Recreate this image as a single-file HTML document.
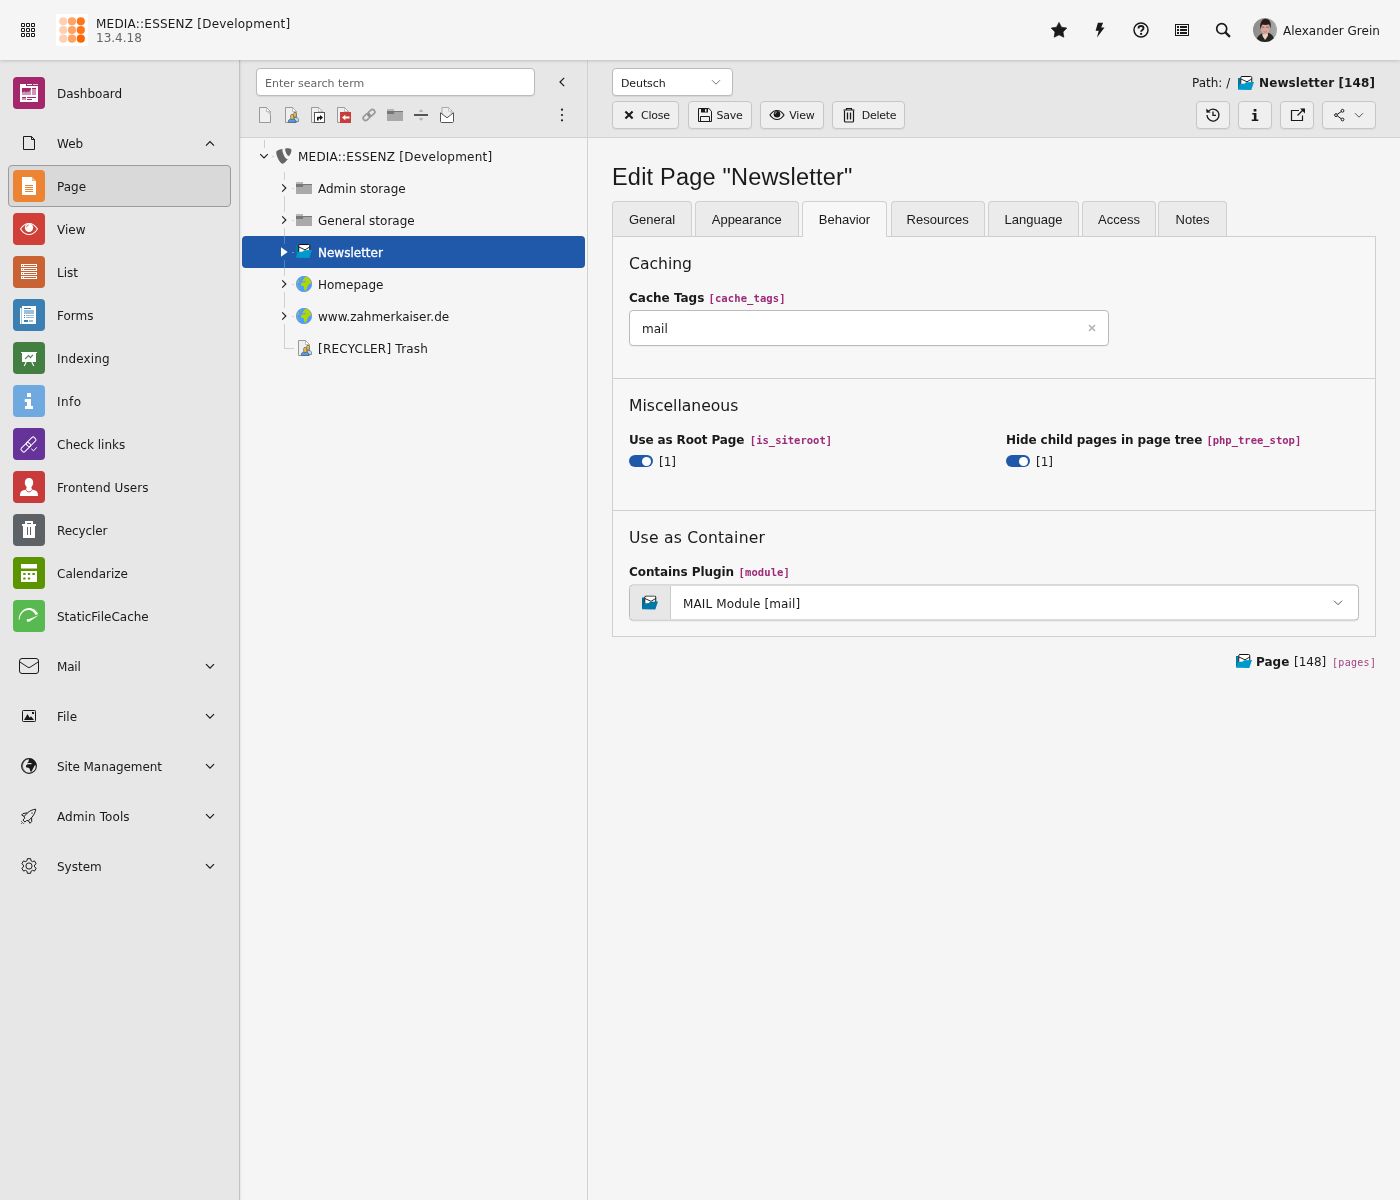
<!DOCTYPE html>
<html lang="en">
<head>
<meta charset="utf-8">
<title>Edit Page "Newsletter" - TYPO3</title>
<style>
*{box-sizing:border-box;margin:0;padding:0}
html,body{width:1400px;height:1200px;overflow:hidden}
body{font-family:"DejaVu Sans","Liberation Sans",sans-serif;font-size:12px;color:#1a1a1a;background:#f5f5f5;position:relative;line-height:1.5;will-change:transform}
svg{display:block}
.abs{position:absolute}
/* ---------- topbar ---------- */
#topbar{position:absolute;left:0;top:0;width:1400px;height:60px;background:#f5f5f5;z-index:5;box-shadow:0 1px 3px rgba(0,0,0,.17)}
#topbar .grid{position:absolute;left:20px;top:22px}
#logo{position:absolute;left:56px;top:14px;width:32px;height:32px;background:#fff}
#site{position:absolute;left:96px;top:17px;font-size:12px;line-height:14px;white-space:nowrap;letter-spacing:.22px}
#site .ver{color:#666;display:block;line-height:14px;letter-spacing:0}
.tb-ico{position:absolute;top:22px;width:16px;height:16px}
#avatar{position:absolute;left:1253px;top:18px;width:24px;height:24px}
#uname{position:absolute;left:1283px;top:22px;font-size:12px;line-height:18px;white-space:nowrap}
/* ---------- module menu ---------- */
#modmenu{position:absolute;left:0;top:60px;width:240px;height:1140px;background:#e7e7e7;border-right:1px solid #c2c2c2;box-shadow:1px 0 2px rgba(0,0,0,.07);z-index:3}
.mm{position:absolute;left:8px;width:223px;height:42px;font-size:12px;line-height:42px;white-space:nowrap;border:1px solid transparent;border-radius:4px}
.mm .ic{position:absolute;left:4px;top:4px;width:32px;height:32px;border-radius:4px;display:flex;align-items:center;justify-content:center}
.mm .lb{position:absolute;left:48px;top:0}
.mm .chev{position:absolute;left:193px;top:12px}
.mm.active{background:#d9d9d9;border-color:#9c9c9c}
/* ---------- page tree ---------- */
#tree{position:absolute;left:240px;top:60px;width:348px;height:1140px;background:#f5f5f5;border-right:1px solid #d2d2d2}
#treebar{position:absolute;left:0;top:0;width:347px;height:78px;background:#e7e7e7;border-bottom:1px solid #d2d2d2}
#tsearch{position:absolute;left:16px;top:8px;padding-top:1px;width:279px;height:28px;background:#fff;border:1px solid #bbb;border-radius:4px;font-size:11px;line-height:28px;padding-left:8px;color:#666;box-shadow:0 1px 1px rgba(0,0,0,.08)}
.ti{position:absolute;top:47px;width:16px;height:16px}
.row{position:absolute;left:2px;width:343px;height:32px;border-radius:4px;font-size:12px;line-height:32px;white-space:nowrap}
.row.sel{background:#2159aa;color:#fff}
.row.sel .nm{-webkit-text-stroke:.3px #fff}
.row .tg{position:absolute;top:8px;width:16px;height:16px}
.row .pi{position:absolute;top:8px;width:16px;height:16px}
.row .nm{position:absolute;top:1px}
/* ---------- content ---------- */
#dochead{position:absolute;left:588px;top:60px;width:812px;height:78px;background:#e7e7e7;border-bottom:1px solid #d2d2d2}
.btn{position:absolute;height:28px;border:1px solid #c6c6c6;border-radius:4px;background:#efefef;font-size:11px;line-height:26px;white-space:nowrap;box-shadow:0 1px 1px rgba(0,0,0,.06)}
.btn svg{position:absolute}
.btn span{position:absolute;top:1px;letter-spacing:-.25px}
#lang{position:absolute;left:24px;top:8px;padding-top:1px;letter-spacing:-.1px;width:121px;height:28px;border:1px solid #bbb;border-radius:4px;background:#fff;font-size:11px;line-height:28px;padding-left:8px;box-shadow:0 1px 1px rgba(0,0,0,.08)}
#path{position:absolute;right:24px;top:13px;font-size:13px;line-height:18px;white-space:nowrap}
h1{position:absolute;left:612px;top:159px;font-family:"Liberation Sans",sans-serif;font-weight:400;font-size:23.5px;letter-spacing:.2px;line-height:36px;white-space:nowrap;color:#1a1a1a;transform-origin:0 50%}
.tab{position:absolute;top:201px;height:36px;border:1px solid #d0d0d0;border-bottom:none;border-radius:4px 4px 0 0;background:#ebebeb;font-family:"Liberation Sans",sans-serif;font-size:13px;line-height:35px;text-align:center;white-space:nowrap}
.tab.on{background:#f7f7f7;z-index:2;box-shadow:0 1px 0 #f7f7f7}
#panel{position:absolute;left:612px;top:236px;width:764px;height:401px;border:1px solid #d0d0d0;background:#f7f7f7}
.sec{position:absolute;left:0;width:762px;border-top:1px solid #d0d0d0}
.h4{position:absolute;left:16px;font-size:15.6px;line-height:24px;white-space:nowrap}
.lbl{position:absolute;font-size:12px;font-weight:700;line-height:18px;white-space:nowrap}
code{font-family:"DejaVu Sans Mono","Liberation Mono",monospace;font-size:10.5px;color:#9c2a78;font-weight:700}
.inp{position:absolute;background:#fff;border:1px solid #bbb;border-radius:4px;font-size:12px;box-shadow:0 1px 1px rgba(0,0,0,.04)}
.tog{position:absolute;width:24px;height:12px;border-radius:6px;background:#2159aa}
.tog i{position:absolute;right:2px;top:1.5px;width:9px;height:9px;border-radius:50%;background:#fff}
.tv{position:absolute;font-size:12px;line-height:18px}
.t12{position:absolute;font-size:12px;line-height:18px;white-space:nowrap}
#foot{position:absolute;right:24px;top:653px;font-size:13px;line-height:18px;white-space:nowrap}
#foot code{font-weight:400}
</style>
</head>
<body>
<div id="topbar">
 <svg class="grid" width="16" height="16" viewBox="0 0 16 16" fill="none" stroke="#1a1a1a" stroke-width="1"><path d="M1.5 1.5h3v3h-3zM6.5 1.5h3v3h-3zM11.5 1.5h3v3h-3zM1.5 6.5h3v3h-3zM6.5 6.5h3v3h-3zM11.5 6.5h3v3h-3zM1.5 11.5h3v3h-3zM6.5 11.5h3v3h-3zM11.5 11.5h3v3h-3z"/></svg>
 <svg id="logo" viewBox="0 0 32 32"><rect width="32" height="32" fill="#fff"/>
  <circle cx="7.25" cy="7.3" r="4.1" fill="#ffd1b3"/><circle cx="16" cy="7.3" r="4.1" fill="#ffa366"/><circle cx="24.8" cy="7.3" r="4.1" fill="#ff7519"/>
  <circle cx="7.25" cy="16" r="4.1" fill="#ffd1b3"/><circle cx="16" cy="16" r="4.1" fill="#ffa366"/><circle cx="24.8" cy="16" r="4.1" fill="#ff7519"/>
  <circle cx="7.25" cy="24.7" r="4.1" fill="#ffd1b3"/><circle cx="16" cy="24.7" r="4.1" fill="#ffa366"/><circle cx="24.8" cy="24.7" r="4.1" fill="#ff6600"/></svg>
 <div id="site">MEDIA::ESSENZ [Development]<span class="ver">13.4.18</span></div>
 <svg class="tb-ico" style="left:1051px" viewBox="0 0 16 16"><path fill="#1a1a1a" stroke="#1a1a1a" stroke-width=".7" stroke-linejoin="round" d="M8.00 0.4L10.47 5.2L15.8 6.07L11.99 9.9L12.82 15.23L8.00 12.8L3.18 15.23L4.01 9.9L0.2 6.07L5.53 5.2z"/></svg>
 <svg class="tb-ico" style="left:1092px" viewBox="0 0 16 16"><path fill="#1a1a1a" d="M5.9.7h5.2L9.2 5.5h3.3L5 15.5l1.7-6.7H3.6z"/></svg>
 <svg class="tb-ico" style="left:1133px" viewBox="0 0 16 16"><circle cx="8" cy="8" r="7" fill="none" stroke="#1a1a1a" stroke-width="1.5"/><path fill="none" stroke="#1a1a1a" stroke-width="1.9" d="M5.5 6.4c0-1.5 1.1-2.4 2.5-2.4s2.5.9 2.5 2.2c0 1.7-2.4 1.7-2.4 3.5"/><circle cx="8.1" cy="11.9" r="1.15" fill="#1a1a1a"/></svg>
 <svg class="tb-ico" style="left:1174px" viewBox="0 0 16 16"><g fill="#1a1a1a"><path fill-rule="evenodd" d="M1 2h14v12H1zM2 3v10h12V3z"/><rect x="3" y="4" width="2" height="2"/><rect x="6" y="4" width="7" height="2"/><rect x="3" y="7" width="2" height="2"/><rect x="6" y="7" width="7" height="2"/><rect x="3" y="10" width="2" height="2"/><rect x="6" y="10" width="7" height="2"/></g></svg>
 <svg class="tb-ico" style="left:1215px" viewBox="0 0 16 16"><circle cx="6.7" cy="6.7" r="5" fill="none" stroke="#1a1a1a" stroke-width="1.7"/><path d="M10.4 10.4l4.5 4.5" stroke="#1a1a1a" stroke-width="2.2" fill="none"/></svg>
 <svg id="avatar" viewBox="0 0 24 24"><defs><linearGradient id="avbg" x1="0" y1="0" x2="1" y2="0"><stop offset="0" stop-color="#8d8988"/><stop offset="1" stop-color="#a6a9a6"/></linearGradient><filter id="avbl" x="-10%" y="-10%" width="120%" height="120%"><feGaussianBlur stdDeviation=".45"/></filter><clipPath id="avcl"><circle cx="12" cy="12" r="12"/></clipPath></defs><g clip-path="url(#avcl)"><rect width="24" height="24" fill="url(#avbg)"/><g filter="url(#avbl)"><path d="M3 24c.3-4.5 2.5-7 6-8.5l2.5-1.5h2.5l2.5 1.2c3 1.2 4.8 4 5 8.8z" fill="#262826"/><path d="M9.3 15.2l2.8 1 3-1.2-.3 3-2.7 4-2.6-4z" fill="#ecd3bc"/><ellipse cx="12.3" cy="11" rx="4.3" ry="5.3" fill="#d9a79b"/><path d="M7.3 11.5C6.5 5.5 8.5.7 12.6.7c4 0 6 3.8 5 9.8-.5-2-.9-3.3-1.7-4.2-1.5.7-4.3.9-6.3.2-1 .9-1.7 2.6-2.3 5z" fill="#2a1d1a"/><path d="M9 9.2h2.3M13.3 9.2h2.3" stroke="#6b4038" stroke-width=".7"/><path d="M10.5 13.6c1 .6 2.5.6 3.5 0" stroke="#a8685f" stroke-width=".6" fill="none"/></g></g></svg>
 <div id="uname">Alexander Grein</div>
</div>
<div id="modmenu">
<div class="mm" style="top:12px"><div class="ic" style="background:#a4276b"><svg width="32" height="32" viewBox="0 0 32 32"><path d="M7 7h6v2h12v16H7z" fill="#fff"/><rect x="14" y="7" width="5" height="1" fill="#fff"/><rect x="20" y="7" width="5" height="1" fill="#fff" opacity="0.75"/><rect x="9" y="11" width="9" height="7" fill="#a4276b" opacity="0.5"/><path d="M9 11h9v1l-2 3-1.5-.5-1.5 1-1.5-1.2L9 15.5z" fill="#a4276b"/><rect x="19" y="11" width="4" height="7" fill="#a4276b" opacity="0.5"/><rect x="19" y="11" width="4" height="1" fill="#a4276b"/><rect x="9" y="20" width="4" height="3" fill="#a4276b" opacity="0.5"/><rect x="9" y="20" width="4" height="1" fill="#a4276b"/><rect x="14" y="20" width="9" height="1" fill="#a4276b"/><rect x="14" y="22" width="5" height="1" fill="#a4276b"/></svg></div><span class="lb">Dashboard</span></div>
<div class="mm" style="top:62px"><svg class="abs" style="left:12px;top:12px" width="16" height="16" viewBox="0 0 16 16"><path d="M2.5 1.5h8l3 3v10h-11z M10.5 1.5v3h3" fill="none" stroke="#1a1a1a" stroke-width="1" stroke-linejoin="round"/></svg><span class="lb">Web</span><svg class="chev" width="16" height="16" viewBox="0 0 16 16"><path d="M4 10.6L8 6.6l4 4" fill="none" stroke="#1a1a1a" stroke-width="1.2"/></svg></div>
<div class="mm active" style="top:105px"><div class="ic" style="background:#ed8433"><svg width="32" height="32" viewBox="0 0 32 32"><path d="M9 7h10l4 4v14H9z" fill="#fff"/><path d="M19 7v4h4z" fill="#ed8433" opacity=".6"/><rect x="12" y="15" width="8" height="1" fill="#ed8433"/><rect x="12" y="17" width="8" height="1" fill="#ed8433"/><rect x="12" y="19" width="8" height="1" fill="#ed8433"/><rect x="12" y="21" width="8" height="1" fill="#ed8433"/></svg></div><span class="lb">Page</span></div>
<div class="mm" style="top:148px"><div class="ic" style="background:#d03f38"><svg width="32" height="32" viewBox="0 0 32 32"><path d="M7.5 16c2.4-3.7 5.2-5.5 8.5-5.5s6.1 1.8 8.5 5.5c-2.4 3.7-5.2 5.5-8.5 5.5s-6.1-1.8-8.5-5.5z" fill="none" stroke="#fff" stroke-width="1.1"/><circle cx="16" cy="14.7" r="4.2" fill="#fff"/><path d="M13.7 14.3c.1-1.3.8-2.1 2-2.3" fill="none" stroke="#d03f38" stroke-width=".9"/></svg></div><span class="lb">View</span></div>
<div class="mm" style="top:191px"><div class="ic" style="background:#c96333"><svg width="32" height="32" viewBox="0 0 32 32"><rect x="8" y="8" width="16" height="3" fill="#fff"/><rect x="9" y="9" width="1" height="1" fill="#c96333"/><rect x="11" y="9" width="12" height="1" fill="#c96333"/><rect x="8" y="12" width="16" height="3" fill="#fff"/><rect x="9" y="13" width="1" height="1" fill="#c96333"/><rect x="11" y="13" width="12" height="1" fill="#c96333"/><rect x="8" y="16" width="16" height="3" fill="#fff"/><rect x="9" y="17" width="1" height="1" fill="#c96333"/><rect x="11" y="17" width="12" height="1" fill="#c96333"/><rect x="8" y="20" width="16" height="3" fill="#fff"/><rect x="9" y="21" width="1" height="1" fill="#c96333"/><rect x="11" y="21" width="12" height="1" fill="#c96333"/></svg></div><span class="lb">List</span></div>
<div class="mm" style="top:234px"><div class="ic" style="background:#3b7fb3"><svg width="32" height="32" viewBox="0 0 32 32"><rect x="7" y="9" width="1" height="16" fill="#fff"/><rect x="8" y="9" width="1" height="16" fill="#fff" opacity="0.55"/><rect x="9" y="7" width="14" height="18" fill="#fff"/><rect x="11" y="9" width="7" height="1" fill="#3b7fb3"/><rect x="11" y="11" width="10" height="4" fill="#3b7fb3" opacity="0.5"/><rect x="11" y="16" width="1" height="1" fill="#3b7fb3"/><rect x="13" y="16" width="8" height="1" fill="#3b7fb3" opacity="0.5"/><rect x="11" y="18" width="1" height="1" fill="#3b7fb3"/><rect x="13" y="18" width="8" height="1" fill="#3b7fb3" opacity="0.5"/><rect x="11" y="21" width="4" height="2" fill="#3b7fb3"/><rect x="16" y="21" width="4" height="2" fill="#3b7fb3" opacity="0.5"/></svg></div><span class="lb">Forms</span></div>
<div class="mm" style="top:277px"><div class="ic" style="background:#447f42"><svg width="32" height="32" viewBox="0 0 32 32"><rect x="8" y="10" width="16" height="1" fill="#fff"/><rect x="9" y="11" width="14" height="9" fill="#fff"/><path d="M12.2 16.9l3.3-3.4 1.9 2.1 2.5-2.8" fill="none" stroke="#447f42" stroke-width="1.1"/><path d="M13.2 20l-2 4M18.8 20l2 4" stroke="#fff" stroke-width="1.1" fill="none"/></svg></div><span class="lb" style="letter-spacing:0.16px">Indexing</span></div>
<div class="mm" style="top:320px"><div class="ic" style="background:#6eaae0"><svg width="32" height="32" viewBox="0 0 32 32"><rect x="14" y="8" width="4" height="4" fill="#fff"/><path d="M13 14h5v7h2v3h-8v-3h2v-4h-1.5a.8.8 0 0 1-.8-.8V15a1 1 0 0 1 1.3-1z" fill="#fff"/></svg></div><span class="lb" style="letter-spacing:0.47px">Info</span></div>
<div class="mm" style="top:363px"><div class="ic" style="background:#663399"><svg width="32" height="32" viewBox="0 0 32 32"><g fill="none" stroke="#fff" stroke-width="1" transform="rotate(-45 16 16)"><rect x="6.2" y="13.5" width="10.5" height="5" rx="1.5"/><rect x="13.8" y="13.5" width="10.5" height="5" rx="1.5"/></g><path d="M18.3 20.8l2.2 2.1 3.3-3.6" fill="none" stroke="#fff" stroke-width="1"/></svg></div><span class="lb">Check links</span></div>
<div class="mm" style="top:406px"><div class="ic" style="background:#c93a3b"><svg width="32" height="32" viewBox="0 0 32 32"><path d="M16 7c2.6 0 4.2 1.9 4.2 4.5 0 1.7-.6 3.1-1.5 4-.4.5-.5 1.1-.1 1.7.2.4.3.8.3 1.2l3.6 1.2c1.6.6 2.5 2.5 2.6 5.5H6.9c.1-3 1-4.9 2.6-5.5l3.6-1.2c0-.4.1-.8.3-1.2.4-.6.3-1.2-.1-1.7-.9-.9-1.5-2.3-1.5-4C11.8 8.9 13.4 7 16 7z" fill="#fff"/><path d="M13 18.7c.6 1.4 1.6 2.2 3 2.2s2.4-.8 3-2.2" fill="none" stroke="#c93a3b" stroke-width=".9"/></svg></div><span class="lb" style="letter-spacing:0.09px">Frontend Users</span></div>
<div class="mm" style="top:449px"><div class="ic" style="background:#5c6266"><svg width="32" height="32" viewBox="0 0 32 32"><path d="M12.5 7h7a.5.5 0 0 1 .5.5V10h3v2H9v-2h3V7.5a.5.5 0 0 1 .5-.5z" fill="#fff"/><rect x="14" y="9" width="4" height="1" fill="#5c6266"/><path d="M10 12h12v11.5a.5.5 0 0 1-.5.5h-11a.5.5 0 0 1-.5-.5z" fill="#fff"/><rect x="14" y="13" width="1" height="8" fill="#5c6266"/><rect x="17" y="13" width="1" height="8" fill="#5c6266"/></svg></div><span class="lb" style="letter-spacing:-0.1px">Recycler</span></div>
<div class="mm" style="top:492px"><div class="ic" style="background:#5c9400"><svg width="32" height="32" viewBox="0 0 32 32"><rect x="8" y="7" width="16" height="4.5" fill="#fff"/><rect x="8" y="14" width="16" height="11" fill="#fff"/><rect x="10.2" y="16" width="2.4" height="2" rx=".5" fill="#5c9400"/><rect x="14.8" y="16" width="2.4" height="2" rx=".5" fill="#5c9400"/><rect x="19.4" y="16" width="2.4" height="2" rx=".5" fill="#5c9400"/><rect x="10.2" y="20.6" width="2.4" height="2" rx=".5" fill="#5c9400"/><rect x="14.8" y="20.6" width="2.4" height="2" rx=".5" fill="#5c9400"/></svg></div><span class="lb">Calendarize</span></div>
<div class="mm" style="top:535px"><div class="ic" style="background:#57b94f"><svg width="32" height="32" viewBox="0 0 32 32"><path d="M5.6 19.6C6 13.2 10.3 8 16 8c4 0 7.3 2.2 9.1 5.9l-2.6 1.1C21.1 12.1 18.8 10 15.5 10 10.8 10 7 14 6.5 19.8z" fill="#fff"/><path d="M14.5 19.7L26 15l-9.8 6.8z" fill="#fff"/><circle cx="15.1" cy="20.4" r="1.4" fill="#fff"/></svg></div><span class="lb">StaticFileCache</span></div>
<div class="mm" style="top:585px"><svg class="abs" style="left:10px;top:12px" width="20" height="16" viewBox="0 0 20 16"><rect x=".5" y=".5" width="19" height="15" rx="2.5" fill="none" stroke="#1a1a1a" stroke-width="1"/><path d="M.7 3.9l8.2 5.3a2 2 0 0 0 2.2 0l8.2-5.3" fill="none" stroke="#1a1a1a" stroke-width="1"/></svg><span class="lb" style="letter-spacing:-0.17px">Mail</span><svg class="chev" width="16" height="16" viewBox="0 0 16 16"><path d="M4 6.2L8 10.2l4-4" fill="none" stroke="#1a1a1a" stroke-width="1.2"/></svg></div>
<div class="mm" style="top:635px"><svg class="abs" style="left:12px;top:12px" width="16" height="16" viewBox="0 0 16 16"><rect x="1.5" y="2.5" width="13" height="11" rx=".8" fill="none" stroke="#1a1a1a" stroke-width="1"/><path d="M3 12l3.5-6 2.2 3.8 1.3-1.6 3 3.8z" fill="#1a1a1a"/><rect x="11" y="4" width="2" height="2" fill="#1a1a1a"/></svg><span class="lb">File</span><svg class="chev" width="16" height="16" viewBox="0 0 16 16"><path d="M4 6.2L8 10.2l4-4" fill="none" stroke="#1a1a1a" stroke-width="1.2"/></svg></div>
<div class="mm" style="top:685px"><svg class="abs" style="left:12px;top:12px" width="16" height="16" viewBox="0 0 16 16"><circle cx="8" cy="8" r="7.4" fill="none" stroke="#1a1a1a" stroke-width="1.1"/><path d="M8 .6c4.3 0 7.5 3.3 7.4 7.4L14 7l-4 7.5-1.8-4.5L5 9.3V7.5l2-1.5-.5-1.3 1.2-1.5z" fill="#1a1a1a"/><rect x="7" y="5" width="3.5" height="1.2" fill="#e7e7e7"/><path d="M3.8 2.5L2.2 5l-.8 3 .8 3 1.8 2.4" fill="none" stroke="#1a1a1a" stroke-width=".7" opacity=".7"/></svg><span class="lb" style="letter-spacing:-0.06px">Site Management</span><svg class="chev" width="16" height="16" viewBox="0 0 16 16"><path d="M4 6.2L8 10.2l4-4" fill="none" stroke="#1a1a1a" stroke-width="1.2"/></svg></div>
<div class="mm" style="top:735px"><svg class="abs" style="left:12px;top:12px" width="16" height="16" viewBox="0 0 16 16"><path d="M14.7 1.2C11.5 1.5 8.5 3 6.5 4.8L2 5.6.6 7l2.6 1.4.4 2L1.9 12 4 14.1l1.7-1.7 1.7.4L9 15.3l1.7-1.7-.1-4c2-2.1 3.7-5.1 4.1-8.4zM6.5 4.8L3.2 8.4M10.6 9.6l-3.2 3.2" fill="none" stroke="#1a1a1a" stroke-width="1" stroke-linejoin="round"/><rect x="10.5" y="4.5" width="1.1" height="1.1" fill="#1a1a1a"/><rect x="0" y="13" width=".8" height=".8" fill="#1a1a1a"/><rect x="1.2" y="14.2" width=".8" height=".8" fill="#1a1a1a"/><rect x="0" y="15.2" width=".8" height=".8" fill="#1a1a1a"/><rect x="2.3" y="15.2" width=".8" height=".8" fill="#1a1a1a"/></svg><span class="lb" style="letter-spacing:0.1px">Admin Tools</span><svg class="chev" width="16" height="16" viewBox="0 0 16 16"><path d="M4 6.2L8 10.2l4-4" fill="none" stroke="#1a1a1a" stroke-width="1.2"/></svg></div>
<div class="mm" style="top:785px"><svg class="abs" style="left:12px;top:12px" width="16" height="16" viewBox="0 0 16 16"><path d="M6.36 0.68L9.64 0.68L9.97 2.76L11.55 3.67L13.52 2.92L15.16 5.76L13.53 7.09L13.53 8.91L15.16 10.24L13.52 13.08L11.55 12.33L9.97 13.24L9.64 15.32L6.36 15.32L6.03 13.24L4.45 12.33L2.48 13.08L0.84 10.24L2.47 8.91L2.47 7.09L0.84 5.76L2.48 2.92L4.45 3.67L6.03 2.76z" fill="none" stroke="#1a1a1a" stroke-width="1" stroke-linejoin="round"/><circle cx="8" cy="8" r="3.1" fill="none" stroke="#1a1a1a" stroke-width="1"/></svg><span class="lb">System</span><svg class="chev" width="16" height="16" viewBox="0 0 16 16"><path d="M4 6.2L8 10.2l4-4" fill="none" stroke="#1a1a1a" stroke-width="1.2"/></svg></div>
</div>
<div id="tree">
<div id="treebar">
<div id="tsearch">Enter search term</div>
<svg class="abs" style="left:314px;top:14px" width="16" height="16" viewBox="0 0 16 16"><path d="M10.2 3.8L6 8l4.2 4.2" fill="none" stroke="#1a1a1a" stroke-width="1.2"/></svg>
<svg class="abs" style="left:17px;top:47px" width="16" height="16" viewBox="0 0 16 16"><path d="M2.5.5h7l4 4v11h-11z" fill="#efefef" stroke="#999" stroke-width="1"/><path d="M9.5.5v4h4z" fill="#fff" stroke="#999" stroke-width=".6"/><path d="M9.8 4.8h3.7v3.5z" fill="#c8c8c8"/></svg>
<svg class="abs" style="left:43px;top:47px" width="16" height="16" viewBox="0 0 16 16"><path d="M2.5.5h7l4 4v11h-11z" fill="#efefef" stroke="#999" stroke-width="1"/><path d="M9.5.5v4h4z" fill="#fff" stroke="#999" stroke-width=".6"/><path d="M9.8 4.8h3.7v3.5z" fill="#c8c8c8"/><path d="M11.5 10.2l3 .8c.7.2 1 .8 1 1.5v2H11.5z" fill="#b4e0ff" stroke="#666" stroke-width=".7"/><rect x="10.7" y="5.4" width="2.6" height="4.8" rx="1.2" fill="#fbc341" stroke="#5a5a5a" stroke-width=".7"/><path d="M5.4 15.6v-1.7c0-1.1 1.3-1.7 2.3-1.7h2.7c1 0 2.3.6 2.3 1.7v1.7z" fill="#4a9bf5" stroke="#555" stroke-width=".7"/><rect x="7.7" y="7.4" width="2.7" height="5.1" rx="1.25" fill="#fbc341" stroke="#5a5a5a" stroke-width=".7"/></svg>
<svg class="abs" style="left:69px;top:47px" width="16" height="16" viewBox="0 0 16 16"><path d="M2.5.5h7l4 4v11h-11z" fill="#efefef" stroke="#999" stroke-width="1"/><path d="M9.5.5v4h4z" fill="#fff" stroke="#999" stroke-width=".6"/><path d="M9.8 4.8h3.7v3.5z" fill="#c8c8c8"/><rect x="5.5" y="5.5" width="10" height="10" fill="#fff" stroke="#555" stroke-width="1"/><path d="M8 13.5V11c0-.8.4-1.2 1.2-1.2H11V8l3 2.6-3 2.6v-1.8H9.6v2.1z" fill="#111"/></svg>
<svg class="abs" style="left:95px;top:47px" width="16" height="16" viewBox="0 0 16 16"><path d="M2.5.5h7l4 4v11h-11z" fill="#efefef" stroke="#999" stroke-width="1"/><path d="M9.5.5v4h4z" fill="#fff" stroke="#999" stroke-width=".6"/><path d="M9.8 4.8h3.7v3.5z" fill="#c8c8c8"/><rect x="5" y="5" width="11" height="11" fill="#c83c3c"/><path d="M7 10.5l3.3-2.8v1.9H14.5v1.8h-4.2v1.9z" fill="#fff"/></svg>
<svg class="abs" style="left:121px;top:47px" width="16" height="16" viewBox="0 0 16 16"><g transform="rotate(-42 8 8)"><g fill="none" stroke="#999" stroke-width="1.7"><rect x="1" y="5.6" width="7.6" height="4.8" rx="2.4"/><rect x="7.4" y="5.6" width="7.6" height="4.8" rx="2.4"/></g><rect x="6.6" y="6.6" width="2.8" height="2.8" fill="#8c8c8c"/></g></svg>
<svg class="abs" style="left:147px;top:47px" width="16" height="16" viewBox="0 0 16 16"><path d="M0 2h7v2H0z" fill="#b8b8b8"/><path d="M0 7h7l.5-2H16v9H0z" fill="#a9a9a9"/><path d="M0 4h8l-1 3H0z" fill="#777"/><path d="M7 4h9v1H7z" fill="#777"/></svg>
<svg class="abs" style="left:173px;top:47px" width="16" height="16" viewBox="0 0 16 16"><rect x="1" y="7" width="14" height="2" fill="#555"/><path d="M8 2.3l2.3 2.5H5.7z" fill="#aaa"/><path d="M8 13.7l2.3-2.5H5.7z" fill="#aaa"/></svg>
<svg class="abs" style="left:199px;top:47px" width="16" height="16" viewBox="0 0 16 16"><path d="M3 .5h6.5L13 4v7H3z" fill="#eee" stroke="#999" stroke-width=".8"/><path d="M9.5.5V4H13z" fill="#fff" stroke="#999" stroke-width=".5"/><path d="M10 4.3h3v3z" fill="#ccc"/><path d="M1.5 5.8v8.7c0 .6.4 1 1 1h11c.6 0 1-.4 1-1V5.8L8 10.8z" fill="#fff" stroke="#555" stroke-width="1" stroke-linejoin="round"/></svg>
<svg class="abs" style="left:314px;top:47px" width="16" height="16" viewBox="0 0 16 16"><circle cx="8" cy="2.7" r="1.1" fill="#1a1a1a"/><circle cx="8" cy="8" r="1.1" fill="#1a1a1a"/><circle cx="8" cy="13.3" r="1.1" fill="#1a1a1a"/></svg>
</div>
<div class="abs" style="left:24px;top:80px;width:1px;height:8px;background:#cfcfcf"></div><div class="abs" style="left:32px;top:96px;width:2px;height:1px;background:#cfcfcf"></div><div class="abs" style="left:44px;top:112px;width:1px;height:8px;background:#cfcfcf"></div><div class="abs" style="left:44px;top:136px;width:1px;height:16px;background:#cfcfcf"></div><div class="abs" style="left:44px;top:168px;width:1px;height:16px;background:#cfcfcf"></div><div class="abs" style="left:44px;top:200px;width:1px;height:16px;background:#cfcfcf"></div><div class="abs" style="left:44px;top:232px;width:1px;height:16px;background:#cfcfcf"></div><div class="abs" style="left:44px;top:264px;width:1px;height:24px;background:#cfcfcf"></div><div class="abs" style="left:52px;top:128px;width:2px;height:1px;background:#cfcfcf"></div><div class="abs" style="left:52px;top:160px;width:2px;height:1px;background:#cfcfcf"></div><div class="abs" style="left:52px;top:224px;width:2px;height:1px;background:#cfcfcf"></div><div class="abs" style="left:52px;top:256px;width:2px;height:1px;background:#cfcfcf"></div><div class="abs" style="left:44px;top:288px;width:10px;height:1px;background:#cfcfcf"></div>
<div class="row" style="top:80px"><svg class="abs" style="left:14px;top:8px" width="16" height="16" viewBox="0 0 16 16"><path d="M4.2 6.1L8 9.9 11.8 6.1" fill="none" stroke="#1a1a1a" stroke-width="1.1"/></svg><svg class="abs" style="left:34px;top:8px" width="16" height="16" viewBox="0 0 16 16"><g transform="translate(-.9 -.2) scale(1.05 1.02)" fill="#656565"><path d="M12.1 11c-.2.1-.4.1-.6.1-1.9 0-4.6-6.5-4.6-8.7 0-.8.2-1.1.5-1.3C5 1.4 2.3 2.2 1.4 3.3c-.2.3-.3.7-.3 1.2 0 3.4 3.6 11.1 6.2 11.1 1.2 0 3.2-2 4.8-4.6z"/><path d="M10.9.4c2.4 0 4.7.4 4.7 1.7 0 2.7-1.7 5.9-2.6 5.9-1.5 0-3.4-4.3-3.4-6.5 0-1 .4-1.1 1.3-1.1z"/></g></svg><span class="nm" style="left:56px;letter-spacing:0.22px">MEDIA::ESSENZ [Development]</span></div>
<div class="row" style="top:112px"><svg class="abs" style="left:34px;top:8px" width="16" height="16" viewBox="0 0 16 16"><path d="M6.2 4.3L9.9 8 6.2 11.7" fill="none" stroke="#1a1a1a" stroke-width="1.1"/></svg><svg class="abs" style="left:54px;top:8px" width="16" height="16" viewBox="0 0 16 16"><path d="M0 2h7v2H0z" fill="#b8b8b8"/><path d="M0 7h7l.5-2H16v9H0z" fill="#a9a9a9"/><path d="M0 4h8l-1 3H0z" fill="#777"/><path d="M7 4h9v1H7z" fill="#777"/></svg><span class="nm" style="left:76px">Admin storage</span></div>
<div class="row" style="top:144px"><svg class="abs" style="left:34px;top:8px" width="16" height="16" viewBox="0 0 16 16"><path d="M6.2 4.3L9.9 8 6.2 11.7" fill="none" stroke="#1a1a1a" stroke-width="1.1"/></svg><svg class="abs" style="left:54px;top:8px" width="16" height="16" viewBox="0 0 16 16"><path d="M0 2h7v2H0z" fill="#b8b8b8"/><path d="M0 7h7l.5-2H16v9H0z" fill="#a9a9a9"/><path d="M0 4h8l-1 3H0z" fill="#777"/><path d="M7 4h9v1H7z" fill="#777"/></svg><span class="nm" style="left:76px">General storage</span></div>
<div class="row sel" style="top:176px"><div class="abs" style="left:42px;top:0;width:1px;height:8px;background:rgba(255,255,255,.25)"></div><div class="abs" style="left:42px;top:24px;width:1px;height:8px;background:rgba(255,255,255,.25)"></div><div class="abs" style="left:50px;top:16px;width:2px;height:1px;background:rgba(255,255,255,.3)"></div><svg class="abs" style="left:34px;top:8px" width="16" height="16" viewBox="0 0 16 16"><path d="M5 3.3L11.7 8 5 12.7z" fill="#fff"/></svg><svg class="abs" style="left:54px;top:8px" width="16" height="16" viewBox="0 0 16 16"><path d="M0 2h2.3v11H0z" fill="#007aa3"/><rect x="2.75" y=".5" width="11" height="8.5" rx="1.2" fill="#fff" stroke="#111" stroke-width="1"/><path d="M2.9 3l6.1 2.8L13.7 3" fill="none" stroke="#111" stroke-width=".9"/><path d="M0 13.8l2-5.8 5-.5.8-1.3L16 6l-2.7 8z" fill="#0099cc"/></svg><span class="nm" style="left:76px">Newsletter</span></div>
<div class="row" style="top:208px"><svg class="abs" style="left:34px;top:8px" width="16" height="16" viewBox="0 0 16 16"><path d="M6.2 4.3L9.9 8 6.2 11.7" fill="none" stroke="#1a1a1a" stroke-width="1.1"/></svg><svg class="abs" style="left:54px;top:8px" width="16" height="16" viewBox="0 0 16 16"><circle cx="8" cy="8" r="7.7" fill="#4f9bff" stroke="#4a80e0" stroke-width=".6"/><path d="M8.4 1.5l2.8-.4 2.4 1.8 1.4 2.8v2.8l-1-1.2-.6.4-1 1.2-1.2 2.4-.8 2.4-1.2 1-1-1L8 10.5l-.8-.6-2-.2-.4-1.6.8-1.2 1.6-.6h2.6V5.2H6.8l-.6-.3 1-1.2z" fill="#b0d800"/><path d="M4 2.2l1-.1v1l-1 .1zM2.2 4l.9.3-.3 1.5-.9 1.5-.8-.3.3-1.6zM1 8.9l1 .2.1 1.4-.8-.2zM2.3 10.9l1.5.8.3 1.3-1.1-.2z" fill="#a4cf1c"/></svg><span class="nm" style="left:76px">Homepage</span></div>
<div class="row" style="top:240px"><svg class="abs" style="left:34px;top:8px" width="16" height="16" viewBox="0 0 16 16"><path d="M6.2 4.3L9.9 8 6.2 11.7" fill="none" stroke="#1a1a1a" stroke-width="1.1"/></svg><svg class="abs" style="left:54px;top:8px" width="16" height="16" viewBox="0 0 16 16"><circle cx="8" cy="8" r="7.7" fill="#4f9bff" stroke="#4a80e0" stroke-width=".6"/><path d="M8.4 1.5l2.8-.4 2.4 1.8 1.4 2.8v2.8l-1-1.2-.6.4-1 1.2-1.2 2.4-.8 2.4-1.2 1-1-1L8 10.5l-.8-.6-2-.2-.4-1.6.8-1.2 1.6-.6h2.6V5.2H6.8l-.6-.3 1-1.2z" fill="#b0d800"/><path d="M4 2.2l1-.1v1l-1 .1zM2.2 4l.9.3-.3 1.5-.9 1.5-.8-.3.3-1.6zM1 8.9l1 .2.1 1.4-.8-.2zM2.3 10.9l1.5.8.3 1.3-1.1-.2z" fill="#a4cf1c"/></svg><span class="nm" style="left:76px">www.zahmerkaiser.de</span></div>
<div class="row" style="top:272px"><svg class="abs" style="left:54px;top:8px" width="16" height="16" viewBox="0 0 16 16"><path d="M2.5.5h7l4 4v11h-11z" fill="#efefef" stroke="#999" stroke-width="1"/><path d="M9.5.5v4h4z" fill="#fff" stroke="#999" stroke-width=".6"/><path d="M9.8 4.8h3.7v3.5z" fill="#c8c8c8"/><path d="M11.5 10.2l3 .8c.7.2 1 .8 1 1.5v2H11.5z" fill="#b4e0ff" stroke="#666" stroke-width=".7"/><rect x="10.7" y="5.4" width="2.6" height="4.8" rx="1.2" fill="#fbc341" stroke="#5a5a5a" stroke-width=".7"/><path d="M5.4 15.6v-1.7c0-1.1 1.3-1.7 2.3-1.7h2.7c1 0 2.3.6 2.3 1.7v1.7z" fill="#4a9bf5" stroke="#555" stroke-width=".7"/><rect x="7.7" y="7.4" width="2.7" height="5.1" rx="1.25" fill="#fbc341" stroke="#5a5a5a" stroke-width=".7"/></svg><span class="nm" style="left:76px;letter-spacing:0.22px">[RECYCLER] Trash</span></div>
</div>
<div id="dochead">
<div id="lang">Deutsch<svg class="abs" style="left:95px;top:5px" width="16" height="16" viewBox="0 0 16 16"><path d="M4 6.2l4 4 4-4" fill="none" stroke="#777" stroke-width="1"/></svg></div>
<div class="btn" style="left:24px;top:41px;width:67px"><svg style="left:8px;top:5px" width="16" height="16" viewBox="0 0 16 16"><path d="M4.4 4.6l7.2 6.8M11.6 4.6l-7.2 6.8" stroke="#1a1a1a" stroke-width="2.1" fill="none"/></svg><span style="left:28px">Close</span></div>
<div class="btn" style="left:100px;top:41px;width:64px"><svg style="left:7.5px;top:5px" width="16" height="16" viewBox="0 0 16 16"><path d="M1.5 1.5h10.3l2.7 2.7v10.3h-13z" fill="none" stroke="#1a1a1a" stroke-width="1"/><path d="M4 1.5h7v4H4z" fill="#1a1a1a"/><rect x="8" y="2.2" width="1.5" height="2.5" fill="#efefef"/><path d="M3.5 14.5v-5h9v5" fill="none" stroke="#1a1a1a" stroke-width="1"/></svg><span style="left:27.5px">Save</span></div>
<div class="btn" style="left:172px;top:41px;width:64px"><svg style="left:8.3px;top:5px" width="16" height="16" viewBox="0 0 16 16"><path d="M1 8c1.9-3 4.2-4.5 7-4.5s5.1 1.5 7 4.5c-1.9 3-4.2 4.5-7 4.5S2.9 11 1 8z" fill="none" stroke="#1a1a1a" stroke-width="1.2"/><circle cx="8" cy="7.2" r="3.3" fill="#1a1a1a"/><path d="M6.1 6.9c.1-1 .7-1.6 1.6-1.8" fill="none" stroke="#efefef" stroke-width=".8"/></svg><span style="left:28.3px">View</span></div>
<div class="btn" style="left:244px;top:41px;width:73px"><svg style="left:8px;top:5px" width="16" height="16" viewBox="0 0 16 16"><path d="M5.5 2.5v-1h5v1M2.5 3h11" fill="none" stroke="#1a1a1a" stroke-width="1.2"/><path d="M3.5 3.5v10.5a1 1 0 0 0 1 1h7a1 1 0 0 0 1-1V3.5" fill="none" stroke="#1a1a1a" stroke-width="1.2"/><path d="M6.5 5.5v7M9.5 5.5v7" stroke="#1a1a1a" stroke-width="1.3"/></svg><span style="left:28.7px">Delete</span></div>
<div class="t12" style="left:604px;top:14px">Path: /</div><div class="t12" style="left:671px;top:14px;font-weight:700;letter-spacing:.1px">Newsletter [148]</div>
<svg class="abs" style="left:650px;top:16px" width="16" height="16" viewBox="0 0 16 16"><path d="M0 2h2.3v11H0z" fill="#007aa3"/><rect x="2.75" y=".5" width="11" height="8.5" rx="1.2" fill="#fff" stroke="#111" stroke-width="1"/><path d="M2.9 3l6.1 2.8L13.7 3" fill="none" stroke="#111" stroke-width=".9"/><path d="M0 13.8l2-5.8 5-.5.8-1.3L16 6l-2.7 8z" fill="#0099cc"/></svg>
<div class="btn" style="left:608.25px;top:41px;width:33.5px"><svg style="left:7.75px;top:4.7px" width="16" height="16" viewBox="0 0 16 16"><path d="M3.3 4.3A6 6 0 1 1 2 8" fill="none" stroke="#1a1a1a" stroke-width="1.3"/><path d="M1.2 1.5l.3 4.2 4.2-.3z" fill="#1a1a1a"/><path d="M8 4.5V8.3h3" fill="none" stroke="#1a1a1a" stroke-width="1.3"/></svg></div>
<div class="btn" style="left:650.25px;top:41px;width:33.5px"><svg style="left:7.75px;top:5px" width="16" height="16" viewBox="0 0 16 16"><rect x="6.7" y="2" width="2.7" height="2.5" fill="#1a1a1a"/><path d="M5.3 6h4.1v6.5h1.9V14H4.7v-1.5h2.2V7.6H5.3z" fill="#1a1a1a"/></svg></div>
<div class="btn" style="left:692.25px;top:41px;width:33.5px"><svg style="left:8.75px;top:4.7px" width="16" height="16" viewBox="0 0 16 16"><path d="M9 3.5H1.5v10h11V8.5" fill="none" stroke="#1a1a1a" stroke-width="1.2"/><path d="M7.5 8.5l6.5-6.5" stroke="#1a1a1a" stroke-width="1.3"/><path d="M10 1.5h5v5z" fill="#1a1a1a"/></svg></div>
<div class="btn" style="left:734.25px;top:41px;width:53.5px"><svg style="left:7.75px;top:5px" width="16" height="16" viewBox="0 0 16 16"><circle cx="11.5" cy="3.8" r="1.4" fill="none" stroke="#1a1a1a" stroke-width="1"/><circle cx="5" cy="8.1" r="1.4" fill="none" stroke="#1a1a1a" stroke-width="1"/><circle cx="11.5" cy="12.5" r="1.4" fill="none" stroke="#1a1a1a" stroke-width="1"/><path d="M6.3 7.3l3.9-2.7M6.3 8.9l3.9 2.8" stroke="#1a1a1a" stroke-width="1"/></svg><svg style="left:27.75px;top:5px" width="16" height="16" viewBox="0 0 16 16"><path d="M4 6.2l4 4 4-4" fill="none" stroke="#555" stroke-width="1"/></svg></div>
</div>
<h1>Edit Page "Newsletter"</h1>
<div class="tab" style="left:612px;width:80px">General</div><div class="tab" style="left:695px;width:103.6px">Appearance</div><div class="tab on" style="left:801.6px;width:85.8px">Behavior</div><div class="tab" style="left:890.5px;width:94.3px">Resources</div><div class="tab" style="left:987.6px;width:91.8px">Language</div><div class="tab" style="left:1082.2px;width:73.5px">Access</div><div class="tab" style="left:1158.3px;width:68.5px">Notes</div>
<div id="panel">
<div class="h4" style="top:15px">Caching</div>
<div class="lbl" style="left:16px;top:52px">Cache Tags <code style="letter-spacing:.1px">[cache_tags]</code></div>
<div class="inp" style="left:16px;top:73px;width:480px;height:36px;line-height:36px;padding-left:12px">mail<svg class="abs" style="left:454px;top:9px" width="16" height="16" viewBox="0 0 16 16"><path d="M5 5l6 6M11 5l-6 6" stroke="#b2b2b2" stroke-width="1.6"/></svg></div>
<div class="sec" style="top:141px"></div>
<div class="h4" style="top:157px">Miscellaneous</div>
<div class="lbl" style="left:16px;top:194px"><span style="letter-spacing:-.15px">Use as Root Page</span> <code style="margin-left:1.5px">[is_siteroot]</code></div>
<div class="tog" style="left:16px;top:218px"><i></i></div><div class="tv" style="left:46px;top:216px">[1]</div>
<div class="lbl" style="left:393px;top:194px"><span style="letter-spacing:-.09px">Hide child pages in page tree</span> <code>[php_tree_stop]</code></div>
<div class="tog" style="left:393px;top:218px"><i></i></div><div class="tv" style="left:423px;top:216px">[1]</div>
<div class="sec" style="top:273px"></div>
<div class="h4" style="top:289px;letter-spacing:.2px">Use as Container</div>
<div class="lbl" style="left:16px;top:326px"><span style="letter-spacing:-.08px">Contains Plugin</span> <code style="margin-left:.5px;letter-spacing:.1px">[module]</code></div>
<div class="inp" style="left:16px;top:347px;width:730px;height:36px;line-height:34px;overflow:hidden;transform:translateY(.5px)"><div class="abs" style="left:0;top:0;width:41px;height:34px;background:#e7e7e7;border-right:1px solid #ccc"></div><svg class="abs" style="left:12px;top:10px" width="16" height="16" viewBox="0 0 16 16"><path d="M0 2h2.3v11H0z" fill="#006a94"/><rect x="2.75" y=".5" width="11" height="8.5" rx="1.2" fill="#fff" stroke="#111" stroke-width="1"/><path d="M2.9 3l6.1 2.8L13.7 3" fill="none" stroke="#111" stroke-width=".9"/><path d="M0 13.8l2-5.8 5-.5.8-1.3L16 6l-2.7 8z" fill="#0079a6"/></svg><span class="abs" style="left:53px;top:1px;letter-spacing:.12px">MAIL Module [mail]</span><svg class="abs" style="left:700px;top:9px" width="16" height="16" viewBox="0 0 16 16"><path d="M4 6.2l4 4 4-4" fill="none" stroke="#555" stroke-width="1"/></svg></div>
</div>
<div class="t12" style="left:1256px;top:653px;font-weight:700">Page</div><div class="t12" style="left:1294px;top:653px">[148]</div><div class="t12" style="left:1332px;top:653px"><code style="font-weight:400;font-size:10px;letter-spacing:.3px;color:#a3417f">[pages]</code></div><svg class="abs" style="left:1236px;top:654px" width="16" height="16" viewBox="0 0 16 16"><path d="M0 2h2.3v11H0z" fill="#007aa3"/><rect x="2.75" y=".5" width="11" height="8.5" rx="1.2" fill="#fff" stroke="#111" stroke-width="1"/><path d="M2.9 3l6.1 2.8L13.7 3" fill="none" stroke="#111" stroke-width=".9"/><path d="M0 13.8l2-5.8 5-.5.8-1.3L16 6l-2.7 8z" fill="#0099cc"/></svg>
</body>
</html>
